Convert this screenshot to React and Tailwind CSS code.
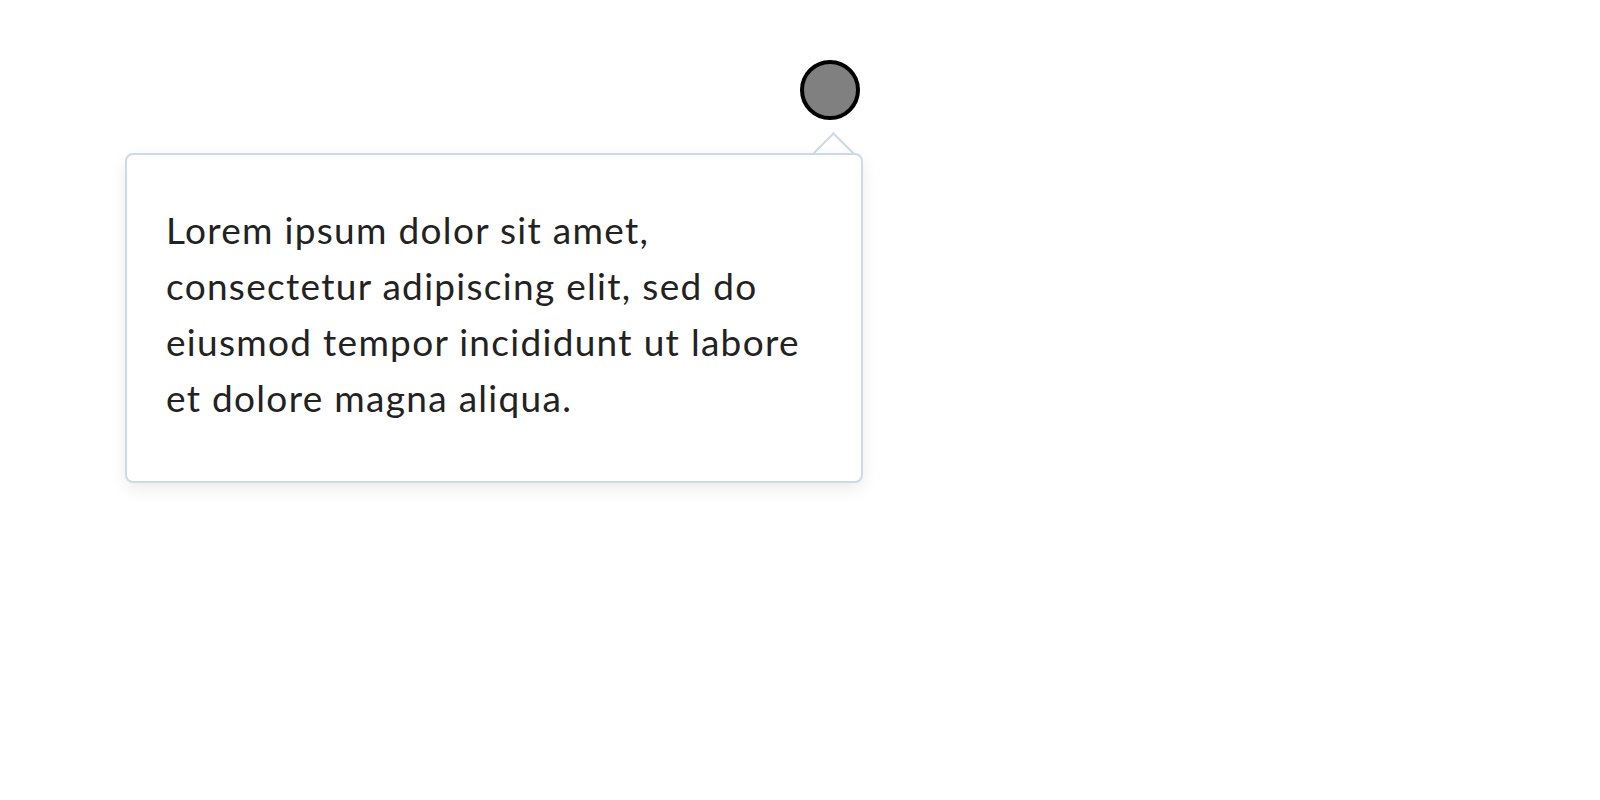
import React from 'react';

function Popover({ children }) {
  return (
    <div className="absolute left-[125px] top-[153px] w-[738px]">
      {/* Arrow pointing up at the anchor */}
      <div className="absolute right-[15px] -top-[15px] w-[29px] h-[29px] rotate-45 bg-white border-l-2 border-t-2 border-[#d0d9e2]" />
      <div className="relative rounded-lg border-2 border-[#d0d9e2] bg-white shadow-[0_6px_16px_rgba(0,0,0,0.08)] pl-[39px] pr-[39px] pt-[47px] pb-[55px]">
        {children}
      </div>
    </div>
  );
}

export default function App() {
  return (
    <div className="relative w-[1600px] h-[800px] bg-white" style={{ fontFamily: 'Lato, "Noto Sans", sans-serif' }}>
      <div className="pt-[60px] pl-[800px]">
        <div className="w-[60px] h-[60px] rounded-full bg-[#808080] border-4 border-black" />
      </div>
      <Popover>
        <p className="text-[37px] leading-[56px] tracking-[1.3px] text-[#222222]">
          Lorem ipsum dolor sit amet, consectetur adipiscing elit, sed do eiusmod tempor incididunt ut labore et dolore magna aliqua.
        </p>
      </Popover>
    </div>
  );
}
